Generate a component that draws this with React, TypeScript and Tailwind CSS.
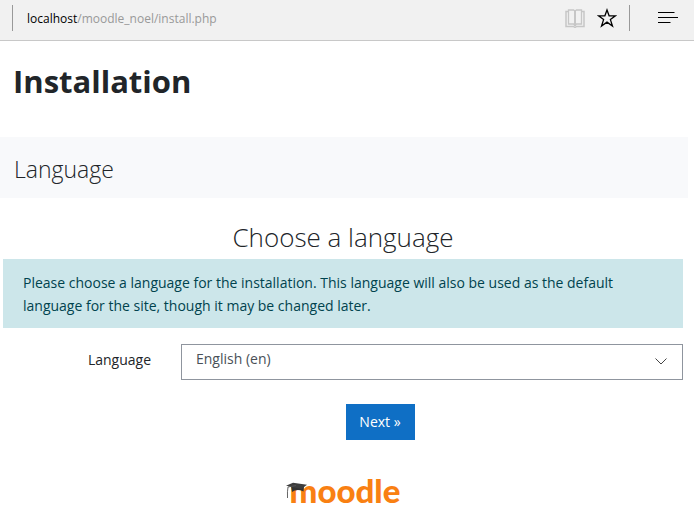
import React from 'react';

function ReadingViewIcon() {
  return (
    <svg width="20" height="19" viewBox="0 0 20 19" fill="none" stroke="#c6c6c6" aria-hidden="true">
      <path d="M3 2.500H1v15h7.500l1.500 1 1.500-1H19v-15h-2" strokeWidth="1.500" />
      <path d="M3.500 1H8.500L10 2l1.500-1h5v14h-5L10 16.500 8.500 15h-5z" strokeWidth="1.300" />
      <path d="M10 2v15" strokeWidth="2" />
    </svg>
  );
}

function StarIcon() {
  return (
    <svg width="20" height="20" viewBox="0 0 20 20" fill="none" stroke="#000" strokeWidth="1.300" aria-hidden="true">
      <path d="M10 2 12.100 7.800H18.500L13.400 11.600 15.500 18 10 14.100 4.500 18 6.600 11.600 1.500 7.800H7.900z" />
    </svg>
  );
}

function HubIcon() {
  return (
    <svg width="20" height="13" viewBox="0 0 20 13" fill="none" stroke="#000" aria-hidden="true">
      <path d="M0 1.500h16.500M0 6.500h20M0 11.500h12.500" />
    </svg>
  );
}

function AddressBar() {
  return (
    <header className="flex h-[41px] items-start border-b border-[#c8c8c8] bg-[#f1f1f1] pt-[5px]">
      <div className="ml-3 h-[26px] w-px bg-[#999]" />
      <div className="ml-[14px] flex-1 text-xs leading-7 text-[#999]">
        <span className="text-black">localhost</span>/moodle_noel/install.php
      </div>
      <button type="button" aria-label="Reading view" className="mr-3 flex h-[26px] items-center">
        <ReadingViewIcon />
      </button>
      <button type="button" aria-label="Add to favorites" className="mr-3 flex h-[26px] items-center">
        <StarIcon />
      </button>
      <div className="h-[26px] w-px bg-[#999]" />
      <button type="button" aria-label="Hub" className="mr-4 ml-7 flex h-6 items-center">
        <HubIcon />
      </button>
    </header>
  );
}

function MoodleLogo() {
  return (
    <div className="relative pl-1 font-['Lato','Open_Sans',sans-serif] text-[33px] leading-[36px] font-black text-[#f98012]">
      moodle
      <svg className="absolute top-[10px] left-0" width="24" height="18" viewBox="0 0 24 18" aria-hidden="true">
        <path d="M5 4 18 4 17.500 9.500Q11 6.500 6 10z" fill="#333" />
        <path d="M0 3.800 7 .8 21 2.800 15.500 7z" fill="#3d3d3d" />
        <path d="M10 3.500 2 5Q1.200 9 1.500 16" fill="none" stroke="#555" strokeWidth=".9" />
      </svg>
    </div>
  );
}

export default function App() {
  return (
    <div className="min-h-screen bg-white font-['Open_Sans','Noto_Sans',sans-serif] text-sm text-[#212529]">
      <AddressBar />
      <h1 className="mt-5 ml-[13px] text-[31px] leading-10 font-bold">Installation</h1>
      <div className="mt-9 mr-[6px] bg-[#f8f9fb] px-[14px] pt-[14px] pb-[10px]">
        <h2 className="text-[23px] leading-[37px] font-light">Language</h2>
      </div>
      <main className="mr-[11px] ml-[3px]">
        <h2 className="pt-5 pb-[2px] text-center text-[26px] leading-[39px] font-light">Choose a language</h2>
        <p className="bg-[#cce6ea] px-5 pt-3 pb-[11px] leading-[23px] text-[#00434e]">
          Please choose a language for the installation. This language will also be used as the default
          language for the site, though it may be changed later.
        </p>
        <form>
          <div className="mt-4 flex">
            <label htmlFor="lang" className="w-[148px] pt-1 text-right leading-6 text-[#212529]">
              Language
            </label>
            <div className="relative ml-[30px] flex-1">
              <select
                id="lang"
                defaultValue="en"
                className="h-9 w-full appearance-none border border-[#8f959e] bg-white pr-8 pb-[7px] pl-[14px] text-[#495057]"
              >
                <option value="en">English (en)</option>
              </select>
              <svg
                className="pointer-events-none absolute top-[14px] right-4"
                width="12"
                height="8"
                viewBox="0 0 12 8"
                fill="none"
                stroke="#444"
                aria-hidden="true"
              >
                <path d="m.5.5 5.500 5.500L11.500.5" />
              </svg>
            </div>
          </div>
          <div className="mt-6 flex justify-center pl-[74px]">
            <button type="button" className="h-9 w-[69px] bg-[#0f6fc5] text-white">
              Next »
            </button>
          </div>
        </form>
      </main>
      <footer className="mt-8 flex justify-center pr-2">
        <MoodleLogo />
      </footer>
    </div>
  );
}
